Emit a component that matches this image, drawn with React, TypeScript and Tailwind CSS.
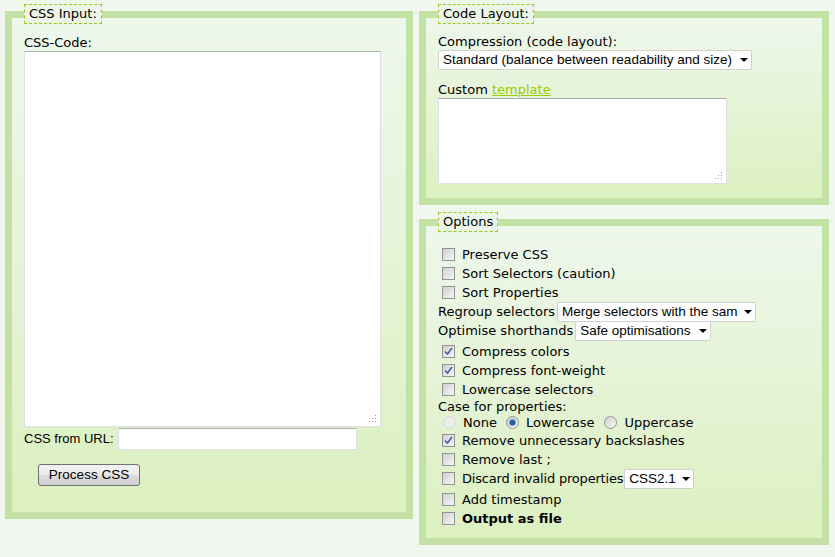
import React from "react";

const verdana = "font-['DejaVu_Sans',Verdana,sans-serif]";
const arial = "font-['Liberation_Sans',Arial,sans-serif]";

function Checkbox({ checked = false }: { checked?: boolean }) {
  return (
    <span className="ml-[4px] mr-[7px] flex h-[13px] w-[13px] shrink-0 items-center justify-center border border-[#939393] bg-[linear-gradient(135deg,#d0d0d0,#f6f6f6)]">
      {checked && (
        <svg width="9" height="9" viewBox="0 0 9 9">
          <path d="M1 4.5 L3.5 7 L8 1" fill="none" stroke="#4a5ca8" strokeWidth="1.6" />
        </svg>
      )}
    </span>
  );
}

function Radio({ checked = false, disabled = false }: { checked?: boolean; disabled?: boolean }) {
  return (
    <span
      className={`flex h-[13px] w-[13px] shrink-0 items-center justify-center rounded-full border ${
        disabled ? "border-[#d6d6d6] bg-[#ececec]" : "border-[#939393] bg-[linear-gradient(135deg,#d0d0d0,#f8f8f8)]"
      }`}
    >
      {checked && <span className="h-[5px] w-[5px] rounded-full bg-[#2a5a9a] shadow-[0_0_0_1px_#6a9ad0]" />}
    </span>
  );
}

function FakeSelect({ value, width }: { value: string; width: string }) {
  return (
    <div
      className={`flex h-[20px] items-center overflow-hidden rounded-[2px] border border-[#d0d0d0] bg-white pl-[4px] pr-[3px] text-[13.5px] text-black ${arial} ${width}`}
    >
      <span className="flex-1 overflow-hidden whitespace-nowrap">{value}</span>
      <svg width="8" height="4" viewBox="0 0 8 4" className="ml-[6px] shrink-0">
        <path d="M0 0 H8 L4 4 Z" fill="#000" />
      </svg>
    </div>
  );
}

function TextBox({ className }: { className: string }) {
  return (
    <div className={`relative border border-[#dbdfe6] border-t-[#abadb3] bg-white ${className}`}>
      <svg width="8" height="8" viewBox="0 0 8 8" className="absolute bottom-[3px] right-[3px]">
        <rect x="6" y="0" width="1" height="1" fill="#999" />
        <rect x="3" y="3" width="1" height="1" fill="#999" />
        <rect x="6" y="3" width="1" height="1" fill="#999" />
        <rect x="0" y="6" width="1" height="1" fill="#999" />
        <rect x="3" y="6" width="1" height="1" fill="#999" />
        <rect x="6" y="6" width="1" height="1" fill="#999" />
      </svg>
    </div>
  );
}

const fieldsetClass =
  "m-0 min-w-0 border-[7px] border-solid border-[#c3e0a5] bg-[linear-gradient(to_bottom,#eef7ec,#dcf0c0)] px-[12px]";

function Legend({ children }: { children: React.ReactNode }) {
  return (
    <legend className="h-[20px] border border-dashed border-[#9acc1c] bg-[#ecf6e8] px-[4px] text-[13px] leading-[18px] text-black">
      {children}
    </legend>
  );
}

function CheckRow({ label, checked, bold, className = "" }: { label: string; checked?: boolean; bold?: boolean; className?: string }) {
  return (
    <div className={`flex h-[19px] items-center ${className}`}>
      <Checkbox checked={checked} />
      <span className={bold ? "font-bold" : ""}>{label}</span>
    </div>
  );
}

export default function App() {
  return (
    <div className={`flex h-[557px] w-[835px] gap-[6px] bg-[#eef6ee] pl-[5px] pt-[4px] text-[13px] leading-[16px] text-black ${verdana}`}>
      {/* CSS input */}
      <fieldset className={`${fieldsetClass} h-[515px] w-[408px] pt-[11px]`}>
        <Legend>CSS Input:</Legend>
        <div className="h-[16px]">CSS-Code:</div>
        <TextBox className="h-[376px] w-[357px]" />
        <div className={`mt-[1px] flex items-center ${arial}`}>
          <span className="mr-[4px]">CSS from URL:</span>
          <div className="h-[22px] w-[239px] border border-[#dbdfe6] border-t-[#abadb3] bg-white" />
        </div>
        <button
          className={`ml-[14px] mt-[14px] h-[22px] w-[102px] rounded-[3px] border border-[#707070] bg-[linear-gradient(to_bottom,#f2f2f2,#ebebeb_50%,#dddddd_51%,#cfcfcf)] text-[13.5px] text-black ${arial}`}
        >
          Process CSS
        </button>
      </fieldset>

      <div className="flex w-[410px] flex-col gap-[7px]">
        {/* Code layout */}
        <fieldset className={`${fieldsetClass} h-[201px] pt-[10px]`}>
          <Legend>Code Layout:</Legend>
          <div className="h-[16px]">Compression (code layout):</div>
          <FakeSelect value="Standard (balance between readability and size)" width="w-[314px]" />
          <div className="mt-[12px] h-[16px]">
            Custom{" "}
            <a href="#" className="text-[#99cc00] underline">
              template
            </a>
          </div>
          <TextBox className="h-[86px] w-[289px]" />
        </fieldset>

        {/* Options */}
        <fieldset className={`${fieldsetClass} h-[333px] pt-[13px]`}>
          <Legend>Options</Legend>
          <CheckRow label="Preserve CSS" />
          <CheckRow label="Sort Selectors (caution)" />
          <CheckRow label="Sort Properties" />
          <div className="flex h-[19px] items-center">
            <span className="mr-[2px]">Regroup selectors</span>
            <FakeSelect value="Merge selectors with the same properties (fast)" width="w-[199px]" />
          </div>
          <div className="flex h-[19px] items-center">
            <span className="mr-[2px]">Optimise shorthands</span>
            <FakeSelect value="Safe optimisations" width="w-[136px]" />
          </div>
          <CheckRow label="Compress colors" checked className="mt-[2px]" />
          <CheckRow label="Compress font-weight" checked />
          <CheckRow label="Lowercase selectors" />
          <div className="flex h-[15px] items-center">Case for properties:</div>
          <div className="flex h-[17px] items-center">
            <span className="ml-[5px] mr-[7px]">
              <Radio disabled />
            </span>
            <span className="mr-[9px]">None</span>
            <span className="mr-[7px]">
              <Radio checked />
            </span>
            <span className="mr-[10px]">Lowercase</span>
            <span className="mr-[7px]">
              <Radio />
            </span>
            <span>Uppercase</span>
          </div>
          <CheckRow label="Remove unnecessary backslashes" checked />
          <CheckRow label="Remove last ;" />
          <div className="flex h-[19px] items-center">
            <Checkbox />
            <span className="mr-[1px] tracking-[-0.2px]">Discard invalid properties</span>
            <FakeSelect value="CSS2.1" width="w-[70px]" />
          </div>
          <CheckRow label="Add timestamp" className="mt-[2px]" />
          <CheckRow label="Output as file" bold />
        </fieldset>
      </div>
    </div>
  );
}
